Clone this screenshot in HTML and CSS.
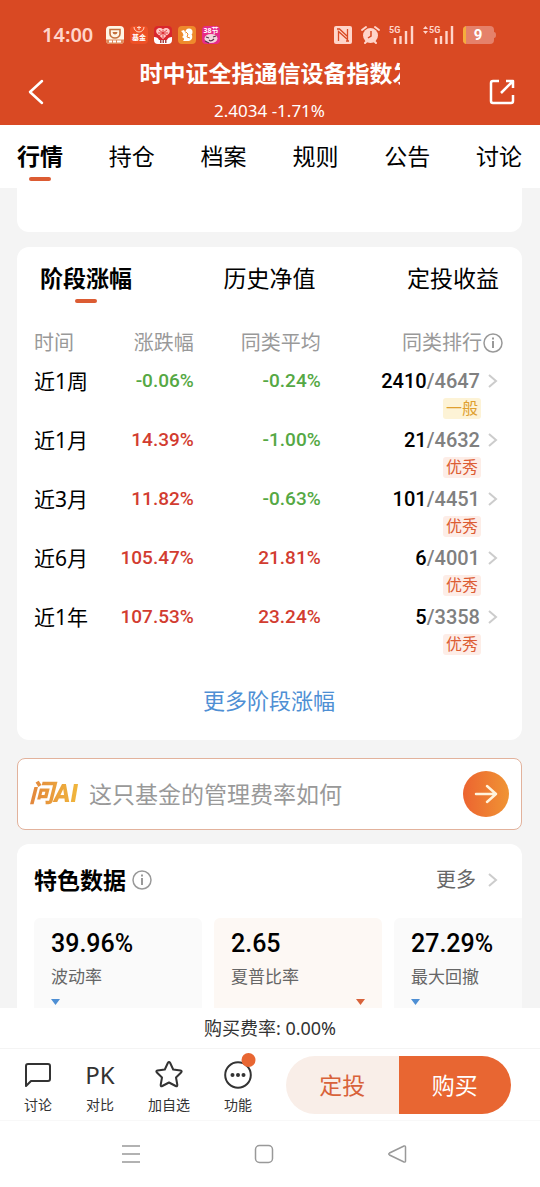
FILE: index.html
```
<!DOCTYPE html>
<html lang="zh-CN">
<head>
    <meta charset="UTF-8">
    <meta name="viewport" content="width=device-width, initial-scale=1">
    <title>基金详情</title>
    <link rel="stylesheet" href="styles.css">
</head>
<body>
<div class="app">
    <header class="header">
        <div class="status">
            <span class="time">14:00</span>
            <div class="apps">
                <svg width="18" height="18" viewBox="0 0 18 18">
                    <rect width="18" height="18" rx="4" fill="#fff6e6"/>
                    <path d="M4 3.500h10v4a5 4.500 0 0 1-10 0z" fill="none" stroke="#c4703c" stroke-width="1.600"/>
                    <path d="M6.500 6h5a2.500 2.500 0 0 1-5 0z" fill="#c4703c"/>
                    <path d="M0 13.500h18v.5a4 4 0 0 1-4 4H4a4 4 0 0 1-4-4z" fill="#e08a5a"/>
                    <path d="M3 15.500h3m1 0h3m1 0h4" stroke="#fff" stroke-width="2"/>
                </svg>
                <svg width="18" height="18" viewBox="0 0 18 18">
                    <rect width="18" height="18" rx="4" fill="#ee5126"/>
                    <path d="M4 1a5 5 0 0 0 10 0M7 1.500h4M9 0v4" fill="none" stroke="#ffd9c9" stroke-width="1"/>
                    <text x="9" y="14" text-anchor="middle" class="app-text">基金</text>
                </svg>
                <svg width="18" height="18" viewBox="0 0 18 18">
                    <rect width="18" height="18" rx="4" fill="#d9262c"/>
                    <path d="M9 13L3 7.500C0 3 6 0 9 3.500 12 0 18 3 15 7.500z" fill="#ffc9c4"/>
                    <path d="M5 4l8 6M13 4l-8 6M9 4v8M4 7h10" stroke="#d9262c" stroke-width="0.800"/>
                    <path d="M0 11q4 0 5 3h8q1-3 5-3v3a4 4 0 0 1-4 4H4a4 4 0 0 1-4-4z" fill="#fff"/>
                    <path d="M6 15.500h1.500m1 0h1.500m1 0h1.500" stroke="#a44" stroke-width="3"/>
                </svg>
                <svg width="18" height="18" viewBox="0 0 18 18">
                    <rect width="18" height="18" rx="4" fill="#ee8a2c"/>
                    <circle cx="11" cy="6" r="3.500" fill="#fff"/>
                    <path d="M3 5l3-1 2 4 6 1c1 4-1 6-5 6H5c2-2 1-3-1-4 2-1 2-3-1-6z" fill="#fff"/>
                    <path d="M8 6l2 2-1 3 3 1" stroke="#ee8a2c" fill="none"/>
                </svg>
                <svg width="18" height="18" viewBox="0 0 18 18">
                    <rect width="18" height="18" rx="4" fill="#e72a86"/>
                    <text x="9" y="7" text-anchor="middle" class="app-text">38节</text>
                    <ellipse cx="9" cy="12.500" rx="6.500" ry="4.500" fill="#f4d6dc"/>
                    <path d="M4 11l3 1m4-1l3-1M7 14q2 2 5-1M3 15l4 2" stroke="#55344c" fill="none" stroke-width="1.200"/>
                </svg>
            </div>
            <div class="signals">
                <svg width="18" height="18" viewBox="0 0 18 18">
                    <rect width="18" height="18" rx="2" fill="#ffd5ca"/>
                    <path d="M4.500 15V5.500l9 8V3M3 3h2.500l8 7.500M12 15h3" fill="none" stroke="#d94923" stroke-width="1.300"/>
                </svg>
                <svg width="19" height="18" viewBox="0 0 19 18">
                    <path d="M1 4l4-3m9 0l4 3M4 17l2-2m9 2l-2-2" stroke="#ffd5ca" stroke-width="2" stroke-linecap="round"/>
                    <circle cx="9.500" cy="9.500" r="7.500" fill="#ffd5ca"/>
                    <path d="M10 5v5l-3 2" fill="none" stroke="#d94923" stroke-width="1.500"/>
                </svg>
                <svg width="25" height="18" viewBox="0 0 25 18">
                    <text x="0" y="7" class="net-text">5G</text>
                    <path d="M6 18v-6m5.500 6V10m5.500 8V5m6 13V0" stroke="#ffd5ca" stroke-width="2.400"/>
                </svg>
                <svg width="31" height="18" viewBox="0 0 31 18">
                    <path d="M0 3l2.500-3L5 3zM0 5h5L2.500 8z" fill="#ffd5ca"/>
                    <text x="6" y="7" class="net-text">5G</text>
                    <path d="M13 18v-6m5 6V10m5.500 8V5m5.500 13V0" stroke="#ffd5ca" stroke-width="2.400"/>
                </svg>
                <svg width="33" height="18" viewBox="0 0 33 18">
                    <rect width="31" height="18" rx="4" fill="#e5816a"/>
                    <path d="M31 6q2 0 2 3t-2 3z" fill="#e5816a"/>
                    <path d="M3 0v18Q0 17 0 14V4Q0 1 3 0z" fill="#f5ad3c"/>
                    <text x="15" y="14" text-anchor="middle" class="battery-text">9</text>
                </svg>
            </div>
        </div>
        <div class="title-bar">
            <button class="icon-btn" aria-label="返回">
                <svg width="26" height="26" viewBox="0 0 26 26" fill="none" stroke="#fff" stroke-width="2.500" stroke-linecap="round" stroke-linejoin="round"><path d="M18 2L6 13l12 11"/></svg>
            </button>
            <div class="title-box">
                <h1 class="title">时中证全指通信设备指数发</h1>
                <p class="quote">2.4034 -1.71%</p>
            </div>
            <button class="icon-btn" aria-label="分享">
                <svg width="26" height="26" viewBox="0 0 26 26" fill="none" stroke="#fff" stroke-width="2.500" stroke-linejoin="round"><path d="M10 2H4q-2 0-2 2v18q0 2 2 2h18q2 0 2-2v-6M12 14L24 2M17 2h7v7"/></svg>
            </button>
        </div>
    </header>

    <nav class="tabs">
        <a href="#" class="tab active">行情</a>
        <a href="#" class="tab">持仓</a>
        <a href="#" class="tab">档案</a>
        <a href="#" class="tab">规则</a>
        <a href="#" class="tab">公告</a>
        <a href="#" class="tab">讨论</a>
    </nav>

    <main class="content">
        <section class="card card-prev"></section>

        <section class="card stage">
            <div class="stage-tabs">
                <a href="#" class="tab active">阶段涨幅</a>
                <a href="#" class="tab">历史净值</a>
                <a href="#" class="tab">定投收益</a>
            </div>
            <table class="rank">
                <thead>
                    <tr>
                        <th class="col-time">时间</th>
                        <th class="col-rise">涨跌幅</th>
                        <th class="col-avg">同类平均</th>
                        <th class="col-rank"><span class="line">同类排行<svg width="22" height="22" viewBox="0 0 22 22"><circle cx="11" cy="11" r="9" fill="none" stroke="#999" stroke-width="1.500"/><path d="M11 9v7M11 5.500v2" stroke="#999" stroke-width="2"/></svg></span></th>
                    </tr>
                </thead>
                <tbody>
                    <tr>
                        <td>近1周</td>
                        <td class="num down">-0.06%</td>
                        <td class="num down">-0.24%</td>
                        <td><a href="#" class="line num"><b>2410</b>/4647<svg class="arrow" width="24" height="16" viewBox="0 0 24 16"><path d="M9 2l7 6-7 6"/></svg></a><span class="badge normal">一般</span></td>
                    </tr>
                    <tr>
                        <td>近1月</td>
                        <td class="num up">14.39%</td>
                        <td class="num down">-1.00%</td>
                        <td><a href="#" class="line num"><b>21</b>/4632<svg class="arrow" width="24" height="16" viewBox="0 0 24 16"><path d="M9 2l7 6-7 6"/></svg></a><span class="badge">优秀</span></td>
                    </tr>
                    <tr>
                        <td>近3月</td>
                        <td class="num up">11.82%</td>
                        <td class="num down">-0.63%</td>
                        <td><a href="#" class="line num"><b>101</b>/4451<svg class="arrow" width="24" height="16" viewBox="0 0 24 16"><path d="M9 2l7 6-7 6"/></svg></a><span class="badge">优秀</span></td>
                    </tr>
                    <tr>
                        <td>近6月</td>
                        <td class="num up">105.47%</td>
                        <td class="num up">21.81%</td>
                        <td><a href="#" class="line num"><b>6</b>/4001<svg class="arrow" width="24" height="16" viewBox="0 0 24 16"><path d="M9 2l7 6-7 6"/></svg></a><span class="badge">优秀</span></td>
                    </tr>
                    <tr>
                        <td>近1年</td>
                        <td class="num up">107.53%</td>
                        <td class="num up">23.24%</td>
                        <td><a href="#" class="line num"><b>5</b>/3358<svg class="arrow" width="24" height="16" viewBox="0 0 24 16"><path d="M9 2l7 6-7 6"/></svg></a><span class="badge">优秀</span></td>
                    </tr>
                </tbody>
            </table>
            <a href="#" class="more-stage">更多阶段涨幅</a>
        </section>

        <form class="ask">
            <label class="ask-logo" for="ask">问AI</label>
            <input class="ask-input" id="ask" type="text" placeholder="这只基金的管理费率如何">
            <button class="ask-btn" type="button" aria-label="提问">
                <svg width="24" height="24" viewBox="0 0 24 24" fill="none" stroke="#fff3dc" stroke-width="2.500" stroke-linecap="round" stroke-linejoin="round"><path d="M2 12h20M13 4l9 8-9 8"/></svg>
            </button>
        </form>

        <section class="card feature">
            <div class="feature-head">
                <h2>特色数据</h2>
                <svg width="22" height="22" viewBox="0 0 22 22"><circle cx="11" cy="11" r="9" fill="none" stroke="#999" stroke-width="1.500"/><path d="M11 9v7M11 5.500v2" stroke="#999" stroke-width="2"/></svg>
                <a href="#" class="line feature-more">更多<svg class="arrow" width="28" height="16" viewBox="0 0 28 16"><path d="M13 2l7 6-7 6"/></svg></a>
            </div>
            <div class="metrics">
                <div class="metric">
                    <strong>39.96%</strong>
                    <span>波动率</span>
                    <i class="mark"></i>
                </div>
                <div class="metric warm">
                    <strong>2.65</strong>
                    <span>夏普比率</span>
                    <i class="mark"></i>
                </div>
                <div class="metric">
                    <strong>27.29%</strong>
                    <span>最大回撤</span>
                    <i class="mark"></i>
                </div>
            </div>
        </section>
    </main>

    <footer class="footer">
        <p class="fee">购买费率: 0.00%</p>
        <div class="actions">
            <button class="tool">
                <svg width="28" height="30" viewBox="0 0 28 30" fill="none" stroke="#333" stroke-width="2" stroke-linejoin="round"><path d="M4 4h20q2 0 2 2v13q0 2-2 2H7l-5 5V6q0-2 2-2z"/></svg>
                讨论
            </button>
            <button class="tool">
                <span class="pk">PK</span>
                对比
            </button>
            <button class="tool">
                <svg width="30" height="30" viewBox="0 0 30 30" fill="none" stroke="#333" stroke-width="2" stroke-linejoin="round"><path d="M13.800 3q1.200-2 2.400 0l3 6.500 7.300 1q2 .5.600 2L22 17.500l1.300 7.300q.2 2-1.600 1.200L15 22.500 8.300 26q-1.800.800-1.600-1.200L8 17.500l-5.100-5q-1.400-1.500.6-2l7.300-1z"/></svg>
                加自选
            </button>
            <button class="tool">
                <svg width="32" height="30" viewBox="0 0 32 30"><circle cx="16" cy="15" r="12.800" fill="none" stroke="#333" stroke-width="2"/><g fill="#333"><circle cx="10.500" cy="15" r="2"/><circle cx="16" cy="15" r="2"/><circle cx="21.500" cy="15" r="2"/></g><circle cx="26.500" cy="0" r="7" fill="#e86632"/></svg>
                功能
            </button>
            <div class="trade">
                <button class="plan">定投</button>
                <button class="buy">购买</button>
            </div>
        </div>
        <div class="sys-nav">
            <svg width="20" height="20" viewBox="0 0 20 20"><path d="M1 2h18M1 10h18M1 18h18"/></svg>
            <svg width="20" height="20" viewBox="0 0 20 20"><rect x="1.500" y="1.500" width="17" height="17" rx="4"/></svg>
            <svg width="20" height="20" viewBox="0 0 20 20"><path d="M17 2L2.500 9q-1.500 1 0 2L17 18q1.500.5 1.500-1V3q0-1.500-1.500-1z"/></svg>
        </div>
    </footer>
</div>
</body>
</html>
```
FILE: styles.css
```
*{
    margin: 0;
    padding: 0;
    box-sizing: border-box;
}
body{
    font-family: "Noto Sans", "Noto Sans CJK SC", sans-serif;
    color: #000;
    background-color: #f4f4f4;
}
a{
    color: inherit;
    text-decoration: none;
}
button, input{
    border: none;
    background: none;
    font-family: inherit;
    color: inherit;
}
svg{
    display: block;
    flex: none;
    overflow: visible;
}
.app{
    display: flex;
    flex-direction: column;
    height: 100vh;
}

/*顶部*/
.header{
    padding-top: 21px;
    background-color: #d94923;
    color: #fff;
}
.status{
    display: flex;
    align-items: center;
    height: 28px;
    padding: 0 44px 0 42px;
}
.time{
    width: 64px;
    font-size: 20px;
    font-weight: 600;
    line-height: 24px;
    color: #ffd5ca;
}
.apps{
    display: flex;
    gap: 6px;
}
.app-text{
    font-size: 7px;
    font-weight: bold;
    fill: #fff;
}
.signals{
    display: flex;
    gap: 9px;
    margin-left: auto;
}
.net-text{
    font-family: Roboto, sans-serif;
    font-size: 9px;
    font-weight: bold;
    fill: #ffd5ca;
}
.battery-text{
    font-family: Roboto, sans-serif;
    font-size: 15px;
    font-weight: bold;
    fill: #fff;
}
.title-bar{
    display: flex;
    align-items: center;
    justify-content: space-between;
    padding: 6px 25px 0 24px;
}
.icon-btn{
    height: 26px;
    margin-top: 4px;
}
.title-box{
    width: 260px;
    overflow: hidden;
    text-align: center;
}
.title{
    font-size: 23px;
    line-height: 36px;
    text-align: left;
    white-space: nowrap;
}
.quote{
    padding: 8px 0 2px;
    font-size: 17px;
    line-height: 24px;
}

/*标签栏*/
.tabs{
    display: flex;
    justify-content: space-between;
    height: 63px;
    padding: 16px 18px 0 17px;
    background-color: #fff;
}
.tab{
    font-size: 23px;
    line-height: 30px;
}
.tab.active{
    font-weight: bold;
}
.tab.active::after{
    content: "";
    display: block;
    width: 22px;
    height: 4px;
    margin: 6px auto 0;
    border-radius: 2px;
    background-color: #dc5c33;
}

/*内容区*/
.content{
    flex: 1;
    min-height: 0;
    padding: 0 18px 0 17px;
    overflow: hidden;
}
.card{
    border-radius: 12px;
    background-color: #fff;
}
.card-prev{
    height: 44px;
    border-radius: 0 0 12px 12px;
}

/*阶段涨幅*/
.stage{
    margin-top: 15px;
    padding: 16px 18px 25px 17px;
}
.stage-tabs{
    display: flex;
    justify-content: space-between;
    padding: 0 5px 0 6px;
}
.rank{
    width: 100%;
    margin-top: 28px;
    table-layout: fixed;
    border-collapse: collapse;
}
.rank th{
    height: 36px;
    font-size: 20px;
    font-weight: normal;
    line-height: 24px;
    color: #999;
    text-align: right;
    vertical-align: top;
}
.rank .col-time{
    width: 17%;
    text-align: left;
}
.col-rise{
    width: 17%;
}
.col-avg{
    width: 27%;
}
.rank td{
    height: 59px;
    font-size: 21px;
    line-height: 28px;
    vertical-align: top;
    white-space: nowrap;
}
.rank .num{
    font-family: Roboto, sans-serif;
    font-size: 19px;
    font-weight: 500;
    text-align: right;
}
.rank .up{
    color: #d23c30;
}
.rank .down{
    color: #55a844;
}
.line{
    display: flex;
    align-items: center;
    justify-content: flex-end;
}
.rank .line.num{
    font-size: 20px;
    color: #808080;
}
.line b{
    font-weight: 500;
    color: #000;
}
.arrow{
    fill: none;
    stroke: #ccc;
    stroke-width: 2;
}
.badge{
    display: block;
    width: 38px;
    margin: 3px 23px 0 auto;
    border-radius: 3px;
    font-size: 16px;
    line-height: 21px;
    text-align: center;
    color: #dc5c33;
    background-color: #fdede7;
}
.badge.normal{
    color: #e0a030;
    background-color: #fdf3d6;
}
.more-stage{
    display: block;
    margin-top: 23px;
    font-size: 22px;
    line-height: 30px;
    text-align: center;
    color: #4e8fd4;
}

/*问AI*/
.ask{
    display: flex;
    align-items: center;
    height: 72px;
    margin-top: 18px;
    padding: 0 12px 0 11px;
    border: 1px solid #e2b29c;
    border-radius: 8px;
    background-color: #fff;
}
.ask-logo{
    width: 60px;
    font-family: Roboto, "Noto Sans CJK SC", sans-serif;
    font-size: 25px;
    font-weight: 900;
    font-style: italic;
    line-height: 36px;
    white-space: nowrap;
    color: transparent;
    background-image: linear-gradient(90deg, #e2853c, #f0b53c 80%);
    -webkit-background-clip: text;
    background-clip: text;
}
.ask-input{
    flex: 1;
    min-width: 0;
    font-size: 23px;
    outline: none;
}
.ask-input::placeholder{
    color: #999;
}
.ask-btn{
    display: flex;
    align-items: center;
    justify-content: center;
    width: 46px;
    height: 46px;
    border-radius: 50%;
    background-image: linear-gradient(90deg, #ec6430, #f09434);
}

/*特色数据*/
.feature{
    margin-top: 14px;
    padding: 21px 0 24px 17px;
    overflow: hidden;
}
.feature-head{
    display: flex;
    align-items: center;
    gap: 5px;
    padding-right: 18px;
}
.feature-head h2{
    font-size: 23px;
    line-height: 30px;
}
.feature-more{
    margin-left: auto;
    font-size: 20px;
    line-height: 30px;
    color: #666;
}
.metrics{
    display: flex;
    gap: 12px;
    margin-top: 23px;
}
.metric{
    display: flex;
    flex-direction: column;
    flex: none;
    width: 168px;
    height: 120px;
    padding: 10px 17px;
    border-radius: 6px;
    background-color: #fafafa;
}
.metric.warm{
    background-color: #fdf8f4;
}
.metric strong{
    font-family: Roboto, sans-serif;
    font-size: 25px;
    font-weight: 500;
    line-height: 32px;
}
.metric span{
    margin-top: 4px;
    font-size: 17px;
    line-height: 26px;
    color: #666;
}
.mark{
    width: 9px;
    height: 6px;
    margin-top: 9px;
    background-color: #4e8fd4;
    clip-path: polygon(0 0, 100% 0, 50% 100%);
}
.warm .mark{
    align-self: flex-end;
    background-color: #d8623a;
}

/*底部操作栏*/
.footer{
    background-color: #fff;
}
.fee{
    border-bottom: 1px solid #f4f4f4;
    font-size: 18px;
    line-height: 40px;
    text-align: center;
    color: #333;
}
.actions{
    display: flex;
    align-items: center;
    gap: 34px;
    height: 72px;
    padding: 0 29px 0 24px;
    border-bottom: 1px solid #f8f8f8;
}
.tool{
    display: flex;
    flex-direction: column;
    align-items: center;
    gap: 5px;
    padding-top: 5px;
    font-size: 14px;
    line-height: 20px;
    white-space: nowrap;
    color: #333;
}
.tool svg{
    margin: 0 -2px;
}
.pk{
    margin: 0 -2px;
    font-size: 24px;
    line-height: 30px;
}
.trade{
    display: flex;
    flex: 1;
    height: 58px;
    border-radius: 29px;
    overflow: hidden;
}
.trade button{
    flex: 1;
    padding-bottom: 2px;
    font-size: 23px;
}
.plan{
    color: #d8623a;
    background-color: #f9eee8;
}
.trade .buy{
    color: #fff;
    background-color: #e86632;
}
.sys-nav{
    display: flex;
    align-items: center;
    justify-content: space-around;
    height: 66px;
    padding: 0 76px 0 64px;
    fill: none;
    stroke: #999;
    stroke-width: 1.500;
}
```
